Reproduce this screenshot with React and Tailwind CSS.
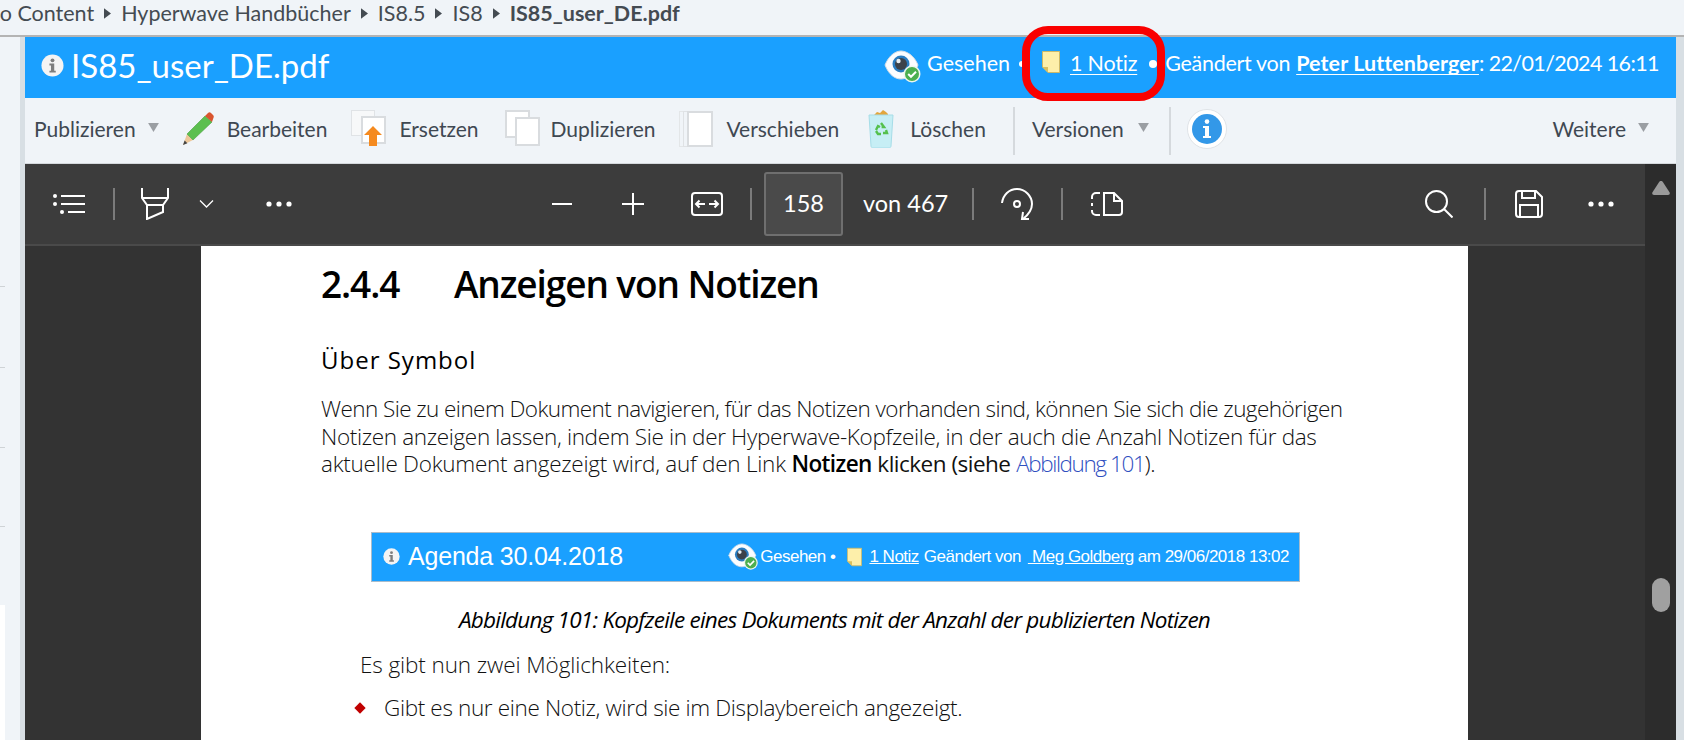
import React from 'react';

const uiFont = "font-['Lato','Open_Sans',sans-serif]";

const Caret = ({ className = '' }) => (
  <svg viewBox="0 0 12 10" className={`w-[11px] h-[9px] shrink-0 ${className}`}>
    <path d="M0 0h12L6 10z" fill="#9a9ea3" />
  </svg>
);

const Crumb = () => (
  <svg viewBox="0 0 8 12" className="mt-[7px] w-[7px] h-[11px] shrink-0">
    <path d="M0 0l8 6-8 6z" fill="#444b52" />
  </svg>
);

const InfoDot = ({ className = '' }) => (
  <svg viewBox="0 0 24 24" className={className}>
    <circle cx="12" cy="12" r="11.5" fill="#f4f4f4" />
    <circle cx="12" cy="6.6" r="2" fill="#7d7d7d" />
    <path d="M8.8 10h5v7.4h1.6v2H8.8v-2h1.6V12H8.8z" fill="#7d7d7d" />
  </svg>
);

const EyeIcon = ({ className = '' }) => (
  <svg viewBox="0 0 38 34" className={className}>
    <path d="M1 15C5 5 12 1 17 1s13 4 17 14c-4 10-11 14-17 14S5 25 1 15z" fill="#fbfdff" stroke="#d5dde5" />
    <circle cx="17" cy="14" r="8.5" fill="#2a7cc0" />
    <circle cx="17" cy="14" r="6" fill="#3c424a" />
    <circle cx="14.5" cy="11" r="2.2" fill="#e8eef2" />
    <circle cx="28" cy="24" r="8.5" fill="#eef6ee" />
    <circle cx="28" cy="24" r="7" fill="#4caf50" />
    <path d="M24.2 24l2.8 2.8 5-5" fill="none" stroke="#fff" strokeWidth="2" />
  </svg>
);

const NoteIcon = ({ className = '' }) => (
  <svg viewBox="0 0 18 22" className={className}>
    <path d="M.5.5h17v21H6L.5 16z" fill="#fdefaa" stroke="#cdb968" strokeWidth="1" />
    <path d="M.5 16H6v5.500z" fill="#d9c060" />
  </svg>
);

const PencilIcon = () => (
  <svg viewBox="0 0 32 34" className="w-[32px] h-[34px]">
    <path d="M1 33l4-11 6 6z" fill="#edc79a" />
    <path d="M1 33l1.600-4.500 2.800 2.800z" fill="#444" />
    <path d="M5 22L23 4l7 6-19 18z" fill="#5cbf4f" stroke="#46a03e" strokeWidth=".6" />
    <path d="M23 4l3-3c1-1 2-1 3 0l2 2c1 1 1 2 .4 3L30 10z" fill="#d9552f" />
  </svg>
);

const PageSheet = ({ className = '' }) => (
  <div className={`bg-white border-2 border-[#d9dcdf] ${className}`} />
);

const ReplaceIcon = () => (
  <div className="relative w-[35px] h-[37px]">
    <div className="w-[24px] h-[26px] bg-[#f7f8f9] border border-[#e0e3e6]" />
    <PageSheet className="absolute left-[10px] top-[6px] w-[25px] h-[28px]" />
    <svg viewBox="0 0 18 20" className="absolute left-[13px] top-[16px] w-[18px] h-[20px]">
      <path d="M9 0l9 9h-5v11H5V9H0z" fill="#f58a1f" />
    </svg>
  </div>
);

const DuplicateIcon = () => (
  <div className="relative w-[35px] h-[37px]">
    <PageSheet className="w-[25px] h-[28px] bg-[#f5f6f7]" />
    <PageSheet className="absolute left-[10px] top-[7px] w-[25px] h-[29px]" />
  </div>
);

const MoveIcon = () => (
  <div className="flex w-[34px] h-[36px]">
    <div className="w-[4px] h-full border-y border-l border-[#e3e6e8]" />
    <div className="w-[4px] h-full border-y border-l border-[#dfe2e5]" />
    <PageSheet className="w-[26px] h-full" />
  </div>
);

const TrashIcon = () => (
  <svg viewBox="0 0 26 38" className="w-[26px] h-[38px]">
    <path d="M6 5l3-3 3 1 3-3 3 2 2 2v3H6z" fill="#e2a63c" />
    <path d="M1 5h24l-2 31c0 1-1 2-2 2H5c-1 0-2-1-2-2z" fill="#c6eef5" stroke="#a6dde8" />
    <path d="M13 13l3 4h-2.400M8 20l2-4 2 1M18 20l1 3-4 0M8 21l2 3h3" fill="none" stroke="#54c04d" strokeWidth="2.400" />
  </svg>
);

const BigInfo = () => (
  <svg viewBox="0 0 40 40" className="w-[40px] h-[40px]">
    <circle cx="20" cy="20" r="19.500" fill="#fff" stroke="#dfe3e7" />
    <circle cx="20" cy="20" r="15" fill="#3398e8" />
    <circle cx="20" cy="12.600" r="2.300" fill="#fff" />
    <path d="M16 17h6v10h2v2h-8v-2h2v-8h-2z" fill="#fff" />
  </svg>
);

const ToolItem = ({ icon, label, className = '', gap = 'ml-[13px]' }) => (
  <div className={`flex items-center ${className}`}>
    {icon}
    <span className={gap}>{label}</span>
  </div>
);

const VBar = ({ className = '' }) => <div className={`w-[2px] h-[32px] bg-[#7b7b7b] shrink-0 ${className}`} />;

const ToolDots = ({ className = '' }) => (
  <svg viewBox="0 0 26 6" className={`w-[26px] h-[6px] shrink-0 ${className}`}>
    <circle cx="3" cy="3" r="2.600" fill="#fff" />
    <circle cx="13" cy="3" r="2.600" fill="#fff" />
    <circle cx="23" cy="3" r="2.600" fill="#fff" />
  </svg>
);

const stroke = { fill: 'none', stroke: '#fff', strokeWidth: 2 };

const Header = () => (
  <div className={`relative h-[61px] bg-[#1aa0ff] text-white flex items-center pl-[16px] pr-[17px] pb-[8px] text-[21.5px] whitespace-nowrap ${uiFont}`}>
    <InfoDot className="mt-[3px] w-[23px] h-[23px] shrink-0" />
    <span className="ml-[7px] mt-[4px] text-[33px] leading-none">IS85_user_DE.pdf</span>
    <EyeIcon className="ml-auto mt-[6px] w-[38px] h-[34px] shrink-0" />
    <span className="ml-[5px]">Gesehen</span>
    <span className="ml-[9px] w-[6px] h-[6px] rounded-full bg-white shrink-0" />
    <NoteIcon className="ml-[17px] mb-[3px] w-[18px] h-[22px] shrink-0" />
    <a className="ml-[10px] tracking-[-0.2px] underline underline-offset-[3px] decoration-1">1 Notiz</a>
    <span className="ml-[12px] w-[8px] h-[8px] rounded-full bg-white shrink-0" />
    <span className="ml-[8px] tracking-[-0.3px]">Geändert von</span>
    <a className="ml-[6px] font-bold tracking-[0.1px] underline underline-offset-[3px] decoration-1">Peter Luttenberger</a>
    <span className="tracking-[-0.6px]">: 22/01/2024 16:11</span>
  </div>
);

const ActionBar = () => (
  <div className={`h-[66px] bg-[#f0f4f8] border-b border-[#d5d9dd] flex items-center pl-[9px] pr-[27px] pb-[4px] text-[21px] text-[#3f4852] ${uiFont}`}>
    <span>Publizieren</span>
    <Caret className="ml-[12px] -mt-[3px]" />
    <ToolItem className="ml-[23px]" icon={<PencilIcon />} label="Bearbeiten" />
    <ToolItem className="ml-[24px]" icon={<ReplaceIcon />} label="Ersetzen" />
    <ToolItem className="ml-[26px]" icon={<DuplicateIcon />} label="Duplizieren" gap="ml-[11px]" />
    <ToolItem className="ml-[24px]" icon={<MoveIcon />} label="Verschieben" />
    <ToolItem className="ml-[29px]" icon={<TrashIcon />} label="Löschen" gap="ml-[16px]" />
    <div className="ml-[27px] mt-[4px] w-[2px] h-[48px] bg-[#d5d9dd]" />
    <span className="ml-[17px]">Versionen</span>
    <Caret className="ml-[14px] -mt-[3px]" />
    <div className="ml-[20px] mt-[4px] w-[2px] h-[48px] bg-[#d5d9dd]" />
    <div className="ml-[16px]"><BigInfo /></div>
    <span className="ml-auto">Weitere</span>
    <Caret className="ml-[12px] -mt-[3px]" />
  </div>
);

const PdfToolbar = () => (
  <div className={`h-[82px] bg-[#3c3c3c] border-b-2 border-[#4a4a4a] flex items-center pl-[28px] pr-[31px] text-white ${uiFont}`}>
    <svg viewBox="0 0 32 20" className="w-[32px] h-[20px] shrink-0">
      <circle cx="2" cy="2" r="2" fill="#fff" /><circle cx="2" cy="10" r="2" fill="#fff" /><circle cx="9" cy="18" r="2" fill="#fff" />
      <path d="M8 2h24M8 10h24M15 18h17" {...stroke} />
    </svg>
    <VBar className="ml-[28px]" />
    <svg viewBox="0 0 28 32" className="ml-[26px] w-[28px] h-[32px] shrink-0">
      <path d="M1 0v10l5 7h16l5-7V0M1 10h26M6 17v14l16-7v-7" {...stroke} />
    </svg>
    <svg viewBox="0 0 14 8" className="ml-[30px] w-[15px] h-[8px] shrink-0">
      <path d="M.5.5L7 7 13.500.5" fill="none" stroke="#fff" strokeWidth="1.300" />
    </svg>
    <ToolDots className="ml-[52px]" />
    <svg viewBox="0 0 20 2" className="ml-[260px] w-[20px] h-[2px] shrink-0">
      <path d="M0 1h20" {...stroke} />
    </svg>
    <svg viewBox="0 0 22 22" className="ml-[50px] w-[22px] h-[22px] shrink-0">
      <path d="M0 11h22M11 0v22" {...stroke} />
    </svg>
    <svg viewBox="0 0 32 24" className="ml-[47px] w-[32px] h-[24px] shrink-0">
      <rect x="1" y="1" width="30" height="22" rx="3" {...stroke} />
      <path d="M5 12h9M8.500 8.500L5 12l3.500 3.500M18 12h9M23.500 8.500L27 12l-3.500 3.500" {...stroke} />
    </svg>
    <VBar className="ml-[27px]" />
    <div className="ml-[12px] w-[79px] h-[64px] rounded-[3px] bg-[#4a4a4a] border-2 border-[#6f6f6f] flex items-center justify-center text-[23.5px]">158</div>
    <span className="ml-[20px] text-[23.5px] whitespace-nowrap">von 467</span>
    <VBar className="ml-[24px]" />
    <svg viewBox="0 0 32 32" className="ml-[27px] w-[32px] h-[32px] shrink-0">
      <path d="M1 15C2 7 8 1 16 1c8 0 15 7 15 15 0 6-4 11-9 15" {...stroke} />
      <path d="M22 24l-1 7h7" {...stroke} />
      <circle cx="16" cy="16" r="3" {...stroke} />
    </svg>
    <VBar className="ml-[28px]" />
    <svg viewBox="0 0 32 24" className="ml-[28px] w-[32px] h-[24px] shrink-0">
      <path d="M9 1H5a4 4 0 0 0-4 4v2M1 11v3M1 18v1a4 4 0 0 0 4 4h4" fill="none" stroke="#fff" strokeWidth="2" />
      <path d="M13 1h10l8 8v11a3 3 0 0 1-3 3H13zM23 1v8h8" {...stroke} />
    </svg>
    <svg viewBox="0 0 28 28" className="ml-auto w-[28px] h-[28px] shrink-0">
      <circle cx="11.500" cy="11.500" r="10.500" {...stroke} />
      <path d="M19 19l8.500 8.500" {...stroke} />
    </svg>
    <VBar className="ml-[31px]" />
    <svg viewBox="0 0 28 28" className="ml-[29px] w-[28px] h-[28px] shrink-0">
      <path d="M4 1h17l6 6v17a3 3 0 0 1-3 3H4a3 3 0 0 1-3-3V4a3 3 0 0 1 3-3z" {...stroke} />
      <path d="M7 1v7h13V1M5 27V15h18v12" {...stroke} />
    </svg>
    <ToolDots className="ml-[45px]" />
  </div>
);

const InnerHeader = () => (
  <div className="mt-[54px] ml-[50px] w-[929px] h-[50px] bg-[#1aa0ff] border border-[#a9bccb] flex items-center pl-[11px] pr-[10px] text-white text-[17px] tracking-[-0.5px] font-['Liberation_Sans',sans-serif] whitespace-nowrap">
    <InfoDot className="w-[17px] h-[17px] shrink-0" />
    <span className="ml-[8px] text-[25px] tracking-[-0.2px]">Agenda 30.04.2018</span>
    <EyeIcon className="ml-auto w-[31px] h-[28px] shrink-0" />
    <span className="ml-[1px]">Gesehen •</span>
    <NoteIcon className="ml-[12px] w-[15px] h-[22px] shrink-0" />
    <a className="ml-[7px] underline">1 Notiz</a>
    <span className="ml-[5px]">Geändert von</span>
    <a className="ml-[7px] underline">&nbsp;Meg Goldberg</a>
    <span className="ml-[4px]">am 29/06/2018 13:02</span>
  </div>
);

const bodyText = "text-[22.5px] font-light text-[#111]";

const PdfPage = () => (
  <div className="w-[1267px] bg-white pl-[120px] overflow-hidden text-black font-['Open_Sans',sans-serif] whitespace-nowrap">
    <h2 className="mt-[15px] h-[46px] flex items-center text-[37px] font-semibold tracking-[-1.1px]">
      <span className="w-[133px]">2.4.4</span>
      <span>Anzeigen von Notizen</span>
    </h2>
    <h3 className="mt-[37px] text-[24px] leading-[32px] tracking-[1px]">Über Symbol</h3>
    <div className={`mt-[19px] leading-[27.5px] ${bodyText}`}>
      <p className="tracking-[-0.57px]">Wenn Sie zu einem Dokument navigieren, für das Notizen vorhanden sind, können Sie sich die zugehörigen</p>
      <p className="tracking-[-0.34px]">Notizen anzeigen lassen, indem Sie in der Hyperwave-Kopfzeile, in der auch die Anzahl Notizen für das</p>
      <p className="tracking-[-0.25px]">aktuelle Dokument angezeigt wird, auf den Link <b className="font-semibold text-black tracking-[-0.6px]">Notizen</b> <span className="font-normal tracking-[-0.5px]">klicken (siehe</span> <span className="text-[#2f4fbf] tracking-[-1.4px]">Abbildung 101</span>).</p>
    </div>
    <InnerHeader />
    <p className="mt-[23px] ml-[138px] text-[22.5px] leading-[30px] italic tracking-[-0.78px]">Abbildung 101: Kopfzeile eines Dokuments mit der Anzahl der publizierten Notizen</p>
    <p className="mt-[15px] ml-[39px] text-[22.5px] leading-[30px] font-light tracking-[-0.1px] text-[#111]">Es gibt nun zwei Möglichkeiten:</p>
    <div className={`mt-[13px] ml-[35px] flex items-center leading-[30px] tracking-[-0.35px] ${bodyText}`}>
      <span className="w-[8px] h-[8px] bg-[#c00000] rotate-45 shrink-0" />
      <span className="ml-[20px]">Gibt es nur eine Notiz, wird sie im Displaybereich angezeigt.</span>
    </div>
  </div>
);

const Sidebar = () => (
  <div className="w-[20px] shrink-0 flex flex-col bg-[#f0f4f8]">
    <div className="mt-[249px] w-[5px] h-px bg-[#cfd3d6]" />
    <div className="mt-[80px] w-[5px] h-px bg-[#cfd3d6]" />
    <div className="mt-[79px] w-[5px] h-px bg-[#cfd3d6]" />
    <div className="mt-[78px] w-[5px] h-px bg-[#cfd3d6]" />
    <div className="mt-[78px] w-[5px] flex-1 bg-white" />
  </div>
);

export default function App() {
  return (
    <div className="relative w-[1684px] h-[740px] overflow-hidden bg-[#f0f4f8] flex flex-col">
      <div className={`h-[37px] shrink-0 border-b-2 border-[#b4b4b4] flex items-start gap-[10px] pt-[1px] text-[21.5px] leading-[24px] text-[#444b52] whitespace-nowrap -ml-[18px] ${uiFont}`}>
        <span>mo Content</span>
        <Crumb />
        <span>Hyperwave Handbücher</span>
        <Crumb />
        <span>IS8.5</span>
        <Crumb />
        <span>IS8</span>
        <Crumb />
        <span className="font-bold">IS85_user_DE.pdf</span>
      </div>

      <div className="flex flex-1 min-h-0">
        <Sidebar />
        <div className="w-[5px] shrink-0 bg-[#d8dfe4]" />
        <div className="w-[1651px] shrink-0 flex flex-col">
          <Header />
          <ActionBar />
          <div className="flex flex-1 min-h-0">
            <div className="w-[1620px] flex flex-col">
              <PdfToolbar />
              <div className="flex-1 min-h-0 bg-[#333333] pl-[176px] flex">
                <PdfPage />
              </div>
            </div>
            <div className="w-[31px] bg-[#2c2c2c] flex flex-col items-center pt-[17px]">
              <svg viewBox="0 0 18 14" className="w-[18px] h-[14px]">
                <path d="M9 0c1 0 1.500.5 2 1.200l6.500 10c.8 1.300 0 2.800-1.500 2.800H2C.5 14-.3 12.500.500 11.200L7 1.200C7.500.5 8 0 9 0z" fill="#9a9a9a" />
              </svg>
              <div className="mt-[383px] w-[18px] h-[34px] rounded-full bg-[#a0a0a0]" />
            </div>
          </div>
        </div>
        <div className="w-[8px] shrink-0 bg-[#d8dfe4]" />
      </div>

      {/* red marker drawn over the header */}
      <div className="absolute left-[1022px] top-[26px] w-[143px] h-[75px] rounded-[26px] border-[8px] border-[#fa0000]" />
    </div>
  );
}
